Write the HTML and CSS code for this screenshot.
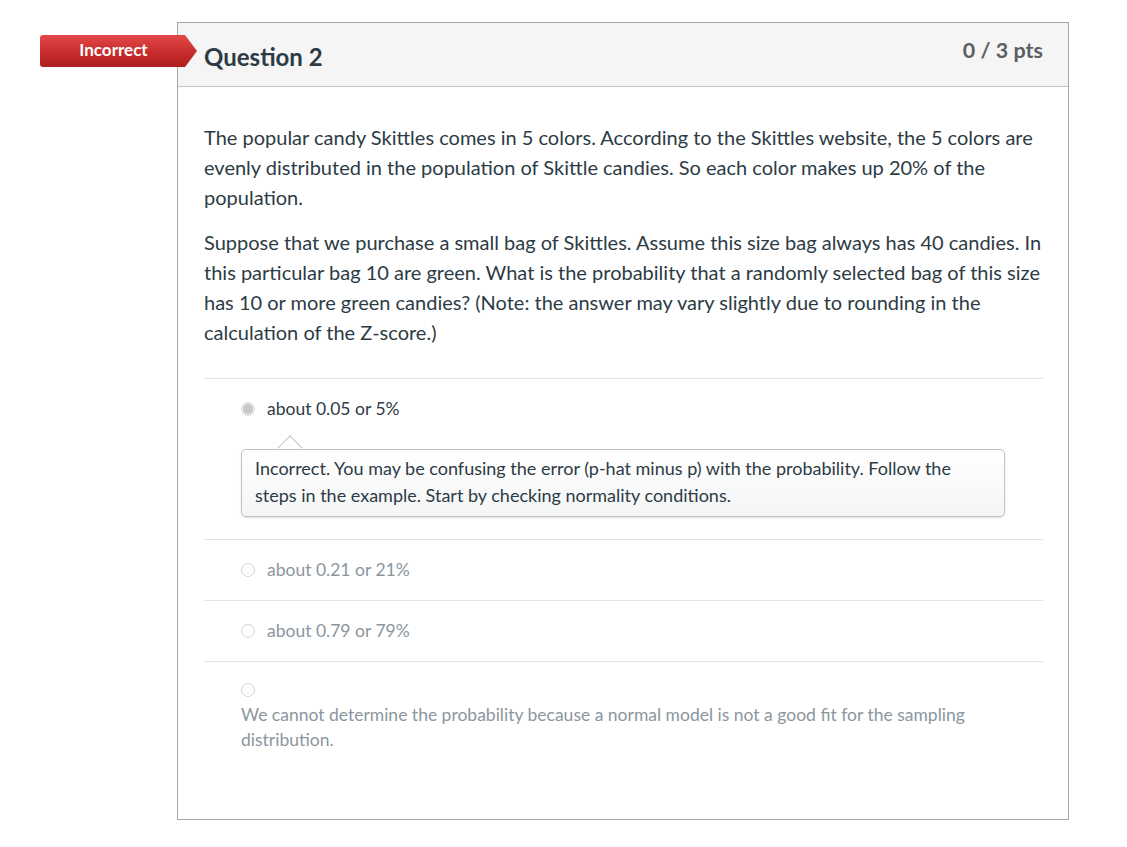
FILE: index.html
```html
<!DOCTYPE html>
<html lang="en">
<head>
<meta charset="utf-8">
<title>Question 2</title>
<link rel="stylesheet" href="styles.css">
</head>
<body>
<div class="page">
  <div class="badge">Incorrect</div>
  <div class="question">
    <div class="q-header">
      <h2 class="q-name">Question 2</h2>
      <div class="q-points">0 / 3 pts</div>
    </div>
    <div class="q-body">
      <p class="q-text">The popular candy Skittles comes in 5 colors. According to the Skittles website, the 5 colors are evenly distributed in the population of Skittle candies. So each color makes up 20% of the population.</p>
      <p class="q-text">Suppose that we purchase a small bag of Skittles. Assume this size bag always has 40 candies. In this particular bag 10 are green. What is the probability that a randomly selected bag of this size has 10 or more green candies? (Note: the answer may vary slightly due to rounding in the calculation of the Z-score.)</p>
      <div class="answers">
        <div class="answer selected">
          <div class="answer-row">
            <span class="radio checked"></span>
            <span class="answer-text">about 0.05 or 5%</span>
          </div>
          <div class="feedback">
            <span class="caret"></span>
            <div class="feedback-box">Incorrect. You may be confusing the error (p-hat minus p) with the probability. Follow the steps in the example. Start by checking normality conditions.</div>
          </div>
        </div>
        <div class="answer">
          <div class="answer-row">
            <span class="radio"></span>
            <span class="answer-text">about 0.21 or 21%</span>
          </div>
        </div>
        <div class="answer">
          <div class="answer-row">
            <span class="radio"></span>
            <span class="answer-text">about 0.79 or 79%</span>
          </div>
        </div>
        <div class="answer last">
          <div class="answer-stack">
            <span class="radio"></span>
            <span class="answer-text long">We cannot determine the probability because a normal model is not a good fit for the sampling distribution.</span>
          </div>
        </div>
      </div>
    </div>
  </div>
</div>
</body>
</html>
```

FILE: styles.css
```css
* { box-sizing: border-box; }

body {
  margin: 0;
  background: #ffffff;
  font-family: Lato, "Open Sans", "Liberation Sans", sans-serif;
  color: #2d3b45;
}

.page {
  position: relative;
  padding: 22px 0 0 177px;
}

.badge {
  position: absolute;
  left: 40px;
  top: 35px;
  width: 157px;
  height: 32px;
  padding-right: 10px;
  padding-bottom: 2px;
  border-radius: 3px 0 0 3px;
  background: linear-gradient(#e3494a, #c42a29 60%, #ad1f1f);
  clip-path: polygon(0 0, 145px 0, 157px 50%, 145px 100%, 0 100%);
  color: #ffffff;
  font-weight: 700;
  font-size: 17px;
  line-height: 30px;
  text-align: center;
}

.question {
  width: 892px;
  border: 1px solid #a8a8a8;
  background: #ffffff;
}

.q-header {
  display: flex;
  justify-content: space-between;
  align-items: flex-start;
  height: 64px;
  padding: 0 25px 0 26px;
  background: #f5f5f5;
  border-bottom: 1px solid #c4c4c4;
}

.q-name {
  margin: 0;
  padding-top: 21px;
  font-size: 24px;
  line-height: 26px;
  font-weight: 700;
  color: #2d3b45;
}

.q-points {
  padding-top: 14px;
  font-size: 21.5px;
  line-height: 26px;
  font-weight: 700;
  color: #5b5f63;
}

.q-body {
  padding: 35px 25px 67px 26px;
}

.q-text {
  margin: 0 0 15px;
  font-size: 20px;
  line-height: 30px;
}

.answers {
  margin-top: 31px;
}

.answer {
  border-top: 1px solid #e2e4e6;
  padding: 19px 0 19px 37px;
  font-size: 17.5px;
  line-height: 22px;
  color: #8b969e;
}

.answer.selected {
  color: #2d3b45;
  padding-bottom: 22px;
}

.answer.last {
  padding-top: 21px;
  padding-bottom: 0;
}

.answer-row {
  display: flex;
  align-items: center;
  gap: 12px;
}

.answer-stack {
  display: flex;
  flex-direction: column;
  align-items: flex-start;
  gap: 5px;
}

.answer-text.long {
  line-height: 25px;
}

.radio {
  flex: none;
  width: 14px;
  height: 14px;
  border-radius: 50%;
  border: 1px solid #d3d7da;
  background: #fdfdfd;
}

.radio.checked {
  border-color: #d2d2d2;
  background: radial-gradient(circle, #c8c8c8 0 5px, #ffffff 5.5px);
}

.feedback {
  position: relative;
  margin-top: 29px;
  width: 764px;
}

.caret {
  position: absolute;
  left: 40px;
  top: -10px;
  width: 18px;
  height: 18px;
  background: #ffffff;
  border-left: 1px solid #bfc6cc;
  border-top: 1px solid #bfc6cc;
  transform: rotate(45deg);
}

.feedback-box {
  position: relative;
  padding: 5px 13px 7px;
  border: 1px solid #bcc4ca;
  border-radius: 5px;
  background: linear-gradient(#ffffff, #f4f5f6);
  box-shadow: 0 1px 2px rgba(0, 0, 0, 0.12);
  color: #2d3b45;
  font-size: 18px;
  line-height: 27px;
}
```
